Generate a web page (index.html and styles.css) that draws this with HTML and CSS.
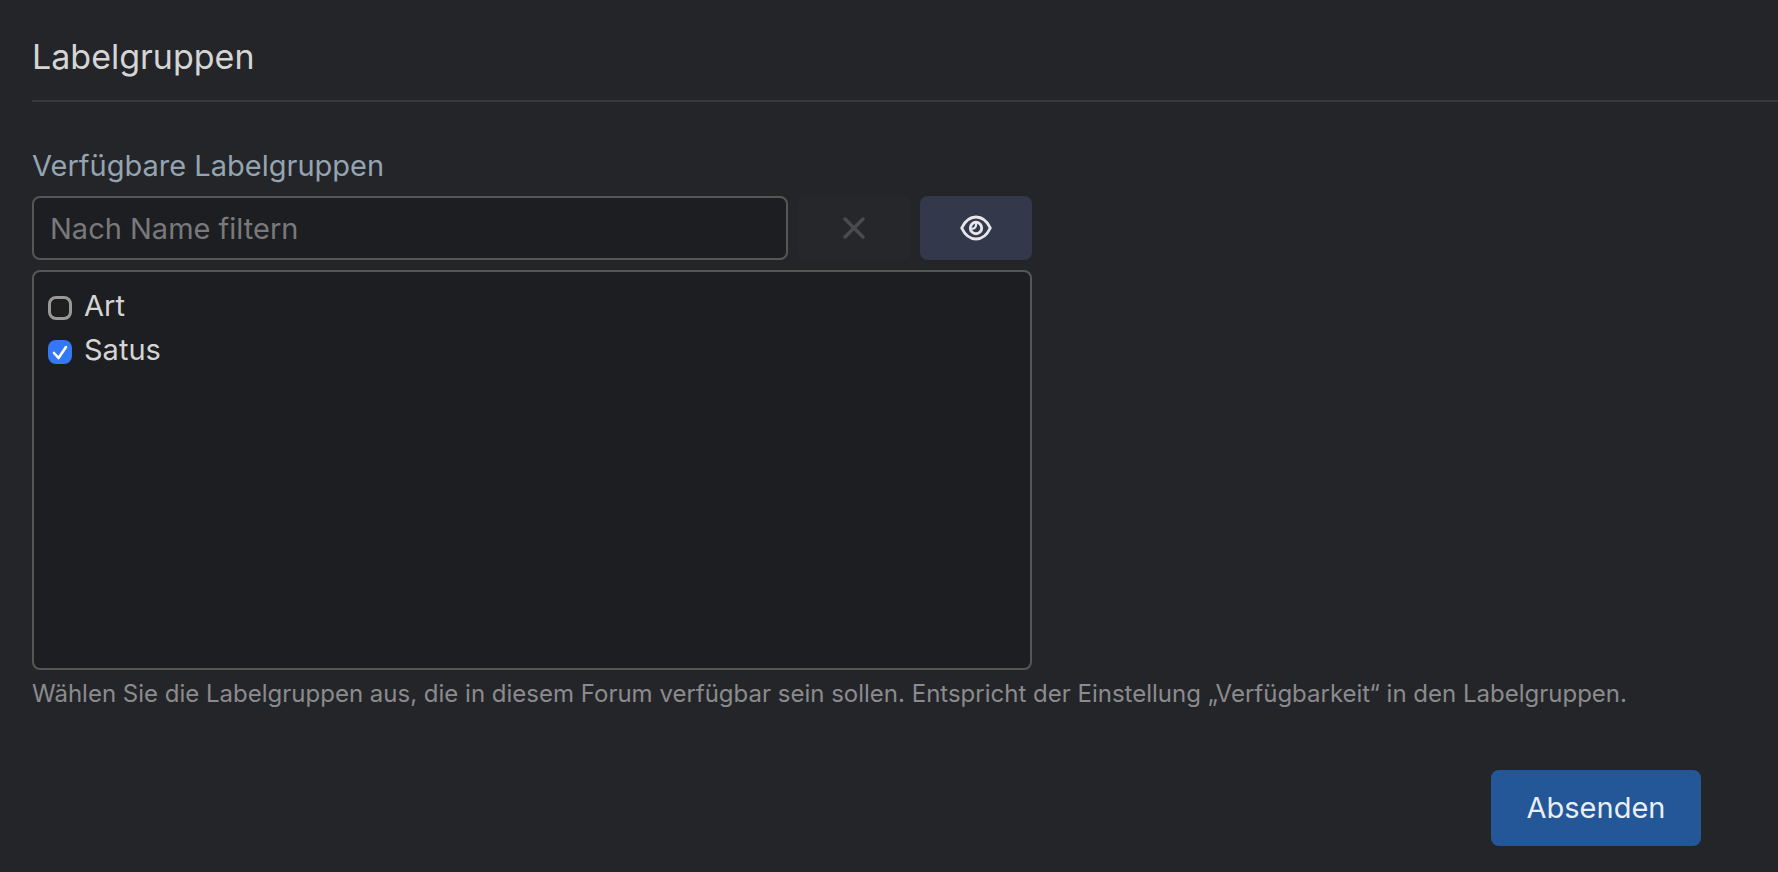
FILE: index.html
```html
<!DOCTYPE html>
<html lang="de">
  <head>
    <meta charset="UTF-8" />
    <title>Labelgruppen</title>
    <link rel="stylesheet" href="styles.css">
  </head>
  <body>
    <form class="section">
      <h2 class="section-title">Labelgruppen</h2>

      <div class="field">
        <label class="field-label" for="filter">Verfügbare Labelgruppen</label>
        <div class="list-box">
          <div class="filter-row">
            <input type="text" id="filter" class="filter-input" placeholder="Nach Name filtern">
            <button type="button" class="button icon-button" aria-label="Filter leeren" disabled>
              <svg width="22" height="22" viewBox="0 0 22 22" fill="none" stroke="currentColor" stroke-width="3.4" stroke-linecap="round">
                <path d="M2 2l18 18M20 2L2 20" />
              </svg>
            </button>
            <button type="button" class="button icon-button" aria-label="Nur markierte anzeigen">
              <svg width="32" height="26" viewBox="0 0 32 26" fill="none" stroke="currentColor" stroke-width="2.9" stroke-linejoin="round">
                <path d="M1.700 13C5 6 10 2 16 2s11 4 14.300 11C27 20 22 24 16 24S5 20 1.700 13z" />
                <circle cx="16" cy="13" r="5.700" />
                <path d="M11.500 13.600c3 .4 5-1.800 4.600-5.400" stroke-width="2.300" />
              </svg>
            </button>
          </div>
          <ul class="options">
            <li>
              <label class="option"><input type="checkbox" class="checkbox"> Art</label>
            </li>
            <li>
              <label class="option"><input type="checkbox" class="checkbox" checked> Satus</label>
            </li>
          </ul>
        </div>
        <small class="hint">Wählen Sie die Labelgruppen aus, die in diesem Forum verfügbar sein sollen. Entspricht der Einstellung „Verfügbarkeit“ in den Labelgruppen.</small>
      </div>

      <div class="form-submit">
        <button type="submit" class="button submit-button">Absenden</button>
      </div>
    </form>
  </body>
</html>
```
FILE: styles.css
```css
* {
  box-sizing: border-box;
}

body {
  margin: 0;
  background-color: #242529;
  color: #d5d5d5;
  font-family: Inter, "Liberation Sans", sans-serif;
  font-size: 29px;
  line-height: 44px;
}

.section {
  padding: 32px 0 26px 32px;
}

.section-title {
  margin: 0 0 42px;
  padding-bottom: 18px;
  border-bottom: 2px solid #38393d;
  font-size: 34px;
  font-weight: 400;
  line-height: 50px;
}

.field-label {
  display: block;
  margin-bottom: 8px;
  color: #94a4b0;
}

.list-box {
  display: flex;
  flex-direction: column;
  gap: 10px;
  max-width: 1000px;
}

.filter-row {
  display: flex;
  gap: 10px;
}

.filter-input {
  flex: 1;
  height: 64px;
  padding: 0 16px;
  border: 2px solid #565755;
  border-radius: 8px;
  background-color: #1d1e21;
  color: #d5d5d5;
  font: inherit;
}

.filter-input::placeholder {
  color: #79797b;
  opacity: 1;
}

.button {
  display: flex;
  align-items: center;
  justify-content: center;
  border: 0;
  border-radius: 8px;
  font: inherit;
}

.icon-button {
  width: 112px;
  background-color: #33394b;
  color: #e6e7ea;
}

.icon-button:disabled {
  background-color: #26272b;
  color: #4a4b4f;
}

.options {
  height: 400px;
  margin: 0;
  padding: 12px 14px;
  overflow: auto;
  border: 2px solid #565755;
  border-radius: 8px;
  background-color: #1d1e21;
  list-style: none;
}

.option {
  display: flex;
  align-items: center;
  gap: 12px;
}

.checkbox {
  appearance: none;
  width: 24px;
  height: 24px;
  margin: 4px 0 0;
  border: 3px solid #999;
  border-radius: 8px;
  background-color: #1f1f1f;
}

.checkbox:checked {
  border: 0;
  background: #3478f6 url("data:image/svg+xml,%3Csvg xmlns='http://www.w3.org/2000/svg' viewBox='0 0 24 24' fill='none' stroke='white' stroke-width='2.6' stroke-linecap='round' stroke-linejoin='round'%3E%3Cpath d='M6 13L10.500 18L18 7'/%3E%3C/svg%3E");
}

.hint {
  display: block;
  margin-top: 8px;
  color: #8b8b8e;
  font-size: 24px;
  line-height: 32px;
}

.form-submit {
  display: flex;
  justify-content: flex-end;
  margin-top: 60px;
  padding-right: 77px;
}

.submit-button {
  min-width: 210px;
  padding: 16px 32px;
  background-color: #235797;
  color: #e9eef5;
}
```
